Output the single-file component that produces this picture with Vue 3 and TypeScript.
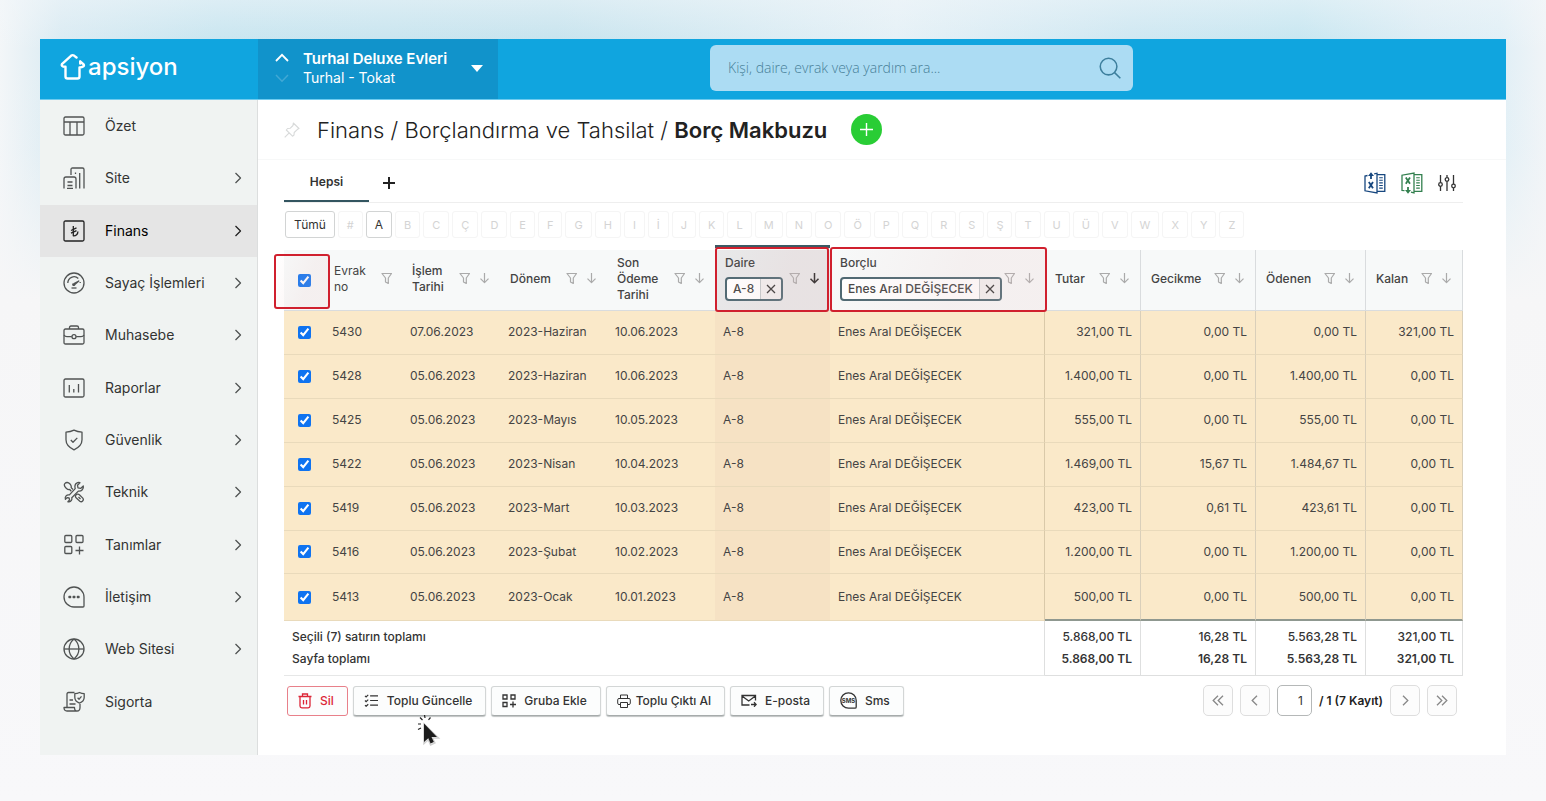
<script setup lang="ts">
import { ref } from 'vue'

interface MenuItem {
  label: string
  icon: string[]
  expandable: boolean
}

interface Receipt {
  no: string
  date: string
  period: string
  due: string
  unit: string
  debtor: string
  amounts: string[]
}

const menu: MenuItem[] = [
  {
    label: 'Özet',
    expandable: false,
    icon: ['M2.5 2h17q1.5 0 1.5 1.5v15q0 1.500-1.500 1.500h-17q-1.500 0-1.500-1.500v-15q0-1.500 1.500-1.500z', 'M1 7h20M7 7v13M14 7v13'],
  },
  {
    label: 'Site',
    expandable: true,
    icon: ['M8 8V2.500q0-1.500 1.500-1.500h10q1.500 0 1.500 1.500V21.500', 'M1 21.500V12q0-2 2-2h8q2 0 2 2v9.500', 'M4.500 15h5M4.500 18.500h5M4 21.500h6M16.700 6v15.500M12.500 5.500v1.500'],
  },
  {
    label: 'Finans',
    expandable: true,
    icon: ['M2.500 1h17q1.500 0 1.500 1.500v17q0 1.500-1.500 1.500h-17q-1.500 0-1.500-1.500v-17q0-1.500 1.500-1.500z', 'M10.300 6v9.800c2.700.2 4.600-1.600 4.600-4.300', 'M8 10.500l5.500-2.600M8 13.200l5.500-2.600'],
  },
  {
    label: 'Sayaç İşlemleri',
    expandable: true,
    icon: ['M11 1a10 10 0 1 1 0 20a10 10 0 1 1 0-20z', 'M4.800 11a6.300 6.300 0 0 1 10.500-4.600M17.200 10v1', 'M10 11.800a1 1 0 1 0 1.800.6zM11 11.500l4.800-2.500l-4 3.600', 'M8.500 16h5'],
  },
  {
    label: 'Muhasebe',
    expandable: true,
    icon: ['M2.500 5h17q1.500 0 1.500 1.500v12q0 1.500-1.500 1.500h-17q-1.500 0-1.500-1.500v-12q0-1.500 1.500-1.500z', 'M6.500 5V3.500q0-1.500 1.500-1.500h6q1.500 0 1.500 1.500V5', 'M1 11q1 1.700 3 1.700h4.800M13.200 12.700H18q2 0 3-1.700', 'M11 10.700a2 2 0 1 1 0 4a2 2 0 1 1 0-4z'],
  },
  {
    label: 'Raporlar',
    expandable: true,
    icon: ['M2.500 2h17q1.500 0 1.500 1.500v15q0 1.500-1.500 1.500h-17q-1.500 0-1.500-1.500v-15q0-1.500 1.500-1.500z', 'M6.300 8v7.500M10.800 12v3.500M15.500 7v8.500'],
  },
  {
    label: 'Güvenlik',
    expandable: true,
    icon: ['M11 1.200q3.500 1.800 8 1.900v7.700c0 4.600-2.500 7.500-8 10c-5.500-2.500-8-5.400-8-10V3.100q4.500-.1 8-1.900z', 'M7.800 11l2.200 2.200l4.300-4.300'],
  },
  {
    label: 'Teknik',
    expandable: true,
    icon: [
      'M12.200 7.600c-.7-2.600.1-4.600 1.500-5.500c1-.7 2.200-.8 3.200-.4l-2.400 2.600l.5 2.600l2.600.5l2.700-2.500c.6 2.900-1.600 5.600-5 5.200L8.800 16.700c.6 2-.8 3.900-2.700 4.200l-1.200-.1l1.700-1.900l-.5-1.900l-2-.4l-1.700 1.700c-.8-2.600 1.300-5 4-4.400z',
      'M8.300 10.200L6.700 8.500C5.500 8.800 4.300 8.200 3.200 7.200C1.300 5.500.9 3.700 2 2.400C3.300 1 5.200 1.300 6.800 2.800C8.200 4.200 8.500 5.300 8.200 6.600L10 8.500',
      'M12.700 14.300c1-1.300 2.500-1.600 3.700-.6l3.400 3.400c1.500 2-.9 4.600-3 3.100l-3.700-3.400c-.8-.9-.9-1.700-.4-2.500zM15.500 16l2 2',
    ],
  },
  {
    label: 'Tanımlar',
    expandable: true,
    icon: ['M2.800 1.500h5q1 0 1 1v5q0 1-1 1h-5q-1 0-1-1v-5q0-1 1-1zM14 1.500h5q1 0 1 1v5q0 1-1 1h-5q-1 0-1-1v-5q0-1 1-1zM2.800 12.500h5q1 0 1 1v5q0 1-1 1h-5q-1 0-1-1v-5q0-1 1-1z', 'M16.500 12.500v8M12.500 16.500h8'],
  },
  {
    label: 'İletişim',
    expandable: true,
    icon: ['M11 1a10 10 0 0 1 10 10V20q0 1-1 1H11a10 10 0 0 1 0-20z', 'M6 10.500h1.600v1h-1.600zM10.200 10.500h1.600v1h-1.600zM14.400 10.500h1.600v1h-1.600z'],
  },
  {
    label: 'Web Sitesi',
    expandable: true,
    icon: ['M11 1a10 10 0 1 1 0 20a10 10 0 1 1 0-20z', 'M11 1c-6.500 5.500-6.500 14.500 0 20M11 1c6.500 5.500 6.500 14.500 0 20', 'M1 11h20'],
  },
  {
    label: 'Sigorta',
    expandable: false,
    icon: ['M4 16V3q0-1.500 1.500-1.500H11.500', 'M1 16.500h10.500q0 3.500 2.500 3.500H4q-3 0-3-3.500zM14 20q3 0 3-3.500V13', 'M16.500 1.500q2.200 1.100 4.700 1.200v3.600q0 4.100-4.700 5.900q-4.700-1.800-4.700-5.900V2.700q2.500-.1 4.700-1.200z', 'M14.600 6.700l1.500 1.500l2.400-2.800', 'M6.500 9h3.500M6.500 13h6'],
  },
]

const letters: string[] = [...'#ABCÇDEFGHIİJKLMNOÖPQRSŞTUÜVWXYZ']

const makeRow = (no: string, date: string, period: string, due: string, amounts: string[]): Receipt => ({
  no, date, period, due, amounts, unit: 'A-8', debtor: 'Enes Aral DEĞİŞECEK',
})

const rows: Receipt[] = [
  makeRow('5430', '07.06.2023', '2023-Haziran', '10.06.2023', ['321,00', '0,00', '0,00', '321,00']),
  makeRow('5428', '05.06.2023', '2023-Haziran', '10.06.2023', ['1.400,00', '0,00', '1.400,00', '0,00']),
  makeRow('5425', '05.06.2023', '2023-Mayıs', '10.05.2023', ['555,00', '0,00', '555,00', '0,00']),
  makeRow('5422', '05.06.2023', '2023-Nisan', '10.04.2023', ['1.469,00', '15,67', '1.484,67', '0,00']),
  makeRow('5419', '05.06.2023', '2023-Mart', '10.03.2023', ['423,00', '0,61', '423,61', '0,00']),
  makeRow('5416', '05.06.2023', '2023-Şubat', '10.02.2023', ['1.200,00', '0,00', '1.200,00', '0,00']),
  makeRow('5413', '05.06.2023', '2023-Ocak', '10.01.2023', ['500,00', '0,00', '500,00', '0,00']),
]

const totals: string[] = ['5.868,00', '16,28', '5.563,28', '321,00']
const textColumns: string[] = ['İşlem Tarihi', 'Dönem', 'Son Ödeme Tarihi']
const moneyColumns: string[] = ['Tutar', 'Gecikme', 'Ödenen', 'Kalan']

const selected = ref<string[]>(rows.map((r) => r.no))
const allSelected = ref(true)
const page = ref('1')
const query = ref('')

const funnel = 'M1 1.500h9.500l-3.200 4.500v5.500l-2.800-1.500v-4z'
const arrow = 'M5.500 1v9.500M1.500 6.700l4 4l4-4'

function toggleAll(): void {
  selected.value = allSelected.value ? rows.map((r) => r.no) : []
}
</script>

<template>
  <div class="backdrop">
    <div class="window">
      <header class="topbar">
        <a class="brand" href="#" aria-label="apsiyon">
          <svg width="26" height="28" viewBox="0 0 26 28" fill="none" stroke="#fff" stroke-width="2.400" stroke-linecap="round" stroke-linejoin="round">
            <path d="M16.500 4.500L14 2.600Q12.500 1.600 11 2.800L2.200 10.800Q1 12.500 3 13.500L5.500 13.700V23.500Q5.500 25.500 7.500 25.500H17.500Q19.500 25.500 19.500 23.500V14.500Q22 14.500 23.500 13.300Q24.500 12 23 10.800L20.200 8.300V10.500" />
          </svg>
          <span>apsiyon</span>
        </a>
        <div class="site">
          <div class="steps">
            <button type="button" aria-label="Önceki site">
              <svg width="14" height="9" viewBox="0 0 14 9" fill="none" stroke="#fff" stroke-width="1.800"><path d="M1 8l6-6.200l6 6.200" /></svg>
            </button>
            <button type="button" class="dim" aria-label="Sonraki site">
              <svg width="14" height="9" viewBox="0 0 14 9" fill="none" stroke="#fff" stroke-width="1.500"><path d="M1 1l6 6.200l6-6.200" /></svg>
            </button>
          </div>
          <button type="button" class="site-name">
            <span><strong>Turhal Deluxe Evleri</strong><br>Turhal - Tokat</span>
            <svg width="12" height="7" viewBox="0 0 12 7" fill="#fff"><path d="M0 0h12l-6 7z" /></svg>
          </button>
        </div>
        <label class="search">
          <input v-model="query" type="text" placeholder="Kişi, daire, evrak veya yardım ara..." aria-label="Ara">
          <svg width="22" height="22" viewBox="0 0 23 23" fill="none" stroke="#3d7f9d" stroke-width="1.600"><circle cx="10" cy="10" r="8.700" /><path d="M16.300 16.300l6 6" /></svg>
        </label>
      </header>

      <div class="body">
        <nav class="sidebar">
          <a v-for="item in menu" :key="item.label" href="#" class="menu-item" :class="{ active: item.label === 'Finans' }">
            <svg class="menu-icon" width="22" height="22" viewBox="0 0 22 22"><path v-for="d in item.icon" :key="d" :d="d" /></svg>
            <span>{{ item.label }}</span>
            <svg v-if="item.expandable" class="chevron" width="8" height="12" viewBox="0 0 8 12"><path d="M1.500 1l5 5l-5 5" /></svg>
          </a>
        </nav>

        <main class="content">
          <div class="heading">
            <button type="button" class="pin" aria-label="Sabitle">
              <svg width="16" height="16" viewBox="0 0 16 16" fill="none" stroke="#d8dada" stroke-width="1.100" stroke-linejoin="round"><path d="M9.300 1l5.700 5.500l-1.500.8l-3.300 3.200l-.2 2.500l-1.500 1.200L2.300 8l1.300-1.500l2.500-.2L9 3.500zM5.200 10.800L.7 15.400" /></svg>
            </button>
            <h1>Finans / Borçlandırma ve Tahsilat / <b>Borç Makbuzu</b></h1>
            <button type="button" class="add" aria-label="Ekle">
              <svg width="15" height="15" viewBox="0 0 15 15" stroke="#fff" stroke-width="1.400"><path d="M7.500 1v13M1 7.500h13" /></svg>
            </button>
          </div>

          <div class="panel">
            <div class="tabs">
              <button type="button" class="tab">Hepsi</button>
              <button type="button" class="new-tab" aria-label="Yeni sekme">
                <svg width="12" height="12" viewBox="0 0 12 12" stroke="#222" stroke-width="2"><path d="M6 0v12M0 6h12" /></svg>
              </button>
              <div class="tools">
                <button type="button" aria-label="Excel yükle">
                  <svg width="22" height="22" viewBox="0 0 22 22" fill="none" stroke="#17477f" stroke-width="1.300">
                    <path d="M3.500 3.500L1 4v14.800l12 2.200V1.200l-2.800.6M13 2.700h7.800v16.600H13" />
                    <path d="M15.200 5.700h3.600M15.200 8.300h3.600M15.200 10.900h3.600M15.200 13.500h3.600M15.200 16.100h3.600" stroke-width="1.100" />
                    <path d="M4.800 10l4.200 6.300M9 10l-4.200 6.300M7 7V2" stroke-width="1.800" /><path d="M4 4l3-3.800l3 3.800z" fill="#17477f" stroke="none" />
                  </svg>
                </button>
                <button type="button" aria-label="Excel indir">
                  <svg width="22" height="22" viewBox="0 0 22 22" fill="none" stroke="#33804f" stroke-width="1.300">
                    <path d="M3.500 18.700L1 18.500V3.200l12-2.200v20l-3-.8M13 2.700h7.800v16.600H13" />
                    <path d="M15.200 5.700h3.600M15.200 8.300h3.600M15.200 10.900h3.600M15.200 13.500h3.600M15.200 16.100h3.600" stroke-width="1.100" />
                    <path d="M4.800 5.500l4.200 6.300M9 5.500l-4.200 6.300M7 15v4" stroke-width="1.800" /><path d="M4 18l3 3.800l3-3.800z" fill="#33804f" stroke="none" />
                  </svg>
                </button>
                <button type="button" aria-label="Sütun ayarları">
                  <svg width="18" height="18" viewBox="0 0 18 18" fill="none" stroke="#333" stroke-width="1.300">
                    <path d="M2.500 1v7.500M2.500 12.500v4.500M9 1v2.500M9 7.500v9.500M15.500 1v9M15.500 14v3" />
                    <circle cx="2.500" cy="10.500" r="1.800" /><circle cx="9" cy="5.500" r="1.800" /><circle cx="15.500" cy="12" r="1.800" />
                  </svg>
                </button>
              </div>
            </div>

            <div class="letters">
              <button type="button" class="letter on">Tümü</button>
              <button v-for="l in letters" :key="l" type="button" class="letter" :class="{ on: l === 'A' }">{{ l }}</button>
            </div>

            <table class="grid">
              <colgroup>
                <col class="c-check"><col class="c-no"><col class="c-date"><col class="c-period"><col class="c-due"><col class="c-unit"><col>
                <col class="c-amount"><col class="c-delay"><col class="c-paid"><col class="c-left">
              </colgroup>
              <thead>
                <tr>
                  <th class="marked check"><input v-model="allSelected" type="checkbox" aria-label="Tümünü seç" @change="toggleAll"></th>
                  <th class="plain">
                    <div class="head"><span class="narrow">Evrak no</span><svg class="hi" viewBox="0 0 11 12"><path :d="funnel" /></svg></div>
                  </th>
                  <th v-for="c in textColumns" :key="c">
                    <div class="head">
                      <span class="narrow">{{ c }}</span>
                      <svg class="hi" viewBox="0 0 11 12"><path :d="funnel" /></svg><svg class="hi" viewBox="0 0 11 12"><path :d="arrow" /></svg>
                    </div>
                  </th>
                  <th class="marked unit sorted">
                    <div class="head">
                      <div class="stack">Daire<span class="chip"><span>A-8</span><button type="button" aria-label="A-8 filtresini kaldır"><svg width="10" height="10" viewBox="0 0 10 10"><path d="M1 1l8 8M9 1l-8 8" /></svg></button></span></div>
                      <svg class="hi" viewBox="0 0 11 12"><path :d="funnel" /></svg><svg class="hi dark" viewBox="0 0 11 12"><path :d="arrow" /></svg>
                    </div>
                  </th>
                  <th class="marked debtor">
                    <div class="head">
                      <div class="stack">Borçlu<span class="chip"><span>Enes Aral DEĞİŞECEK</span><button type="button" aria-label="Borçlu filtresini kaldır"><svg width="10" height="10" viewBox="0 0 10 10"><path d="M1 1l8 8M9 1l-8 8" /></svg></button></span></div>
                      <svg class="hi" viewBox="0 0 11 12"><path :d="funnel" /></svg><svg class="hi" viewBox="0 0 11 12"><path :d="arrow" /></svg>
                    </div>
                  </th>
                  <th v-for="c in moneyColumns" :key="c" class="money">
                    <div class="head">
                      <span>{{ c }}</span>
                      <svg class="hi" viewBox="0 0 11 12"><path :d="funnel" /></svg><svg class="hi" viewBox="0 0 11 12"><path :d="arrow" /></svg>
                    </div>
                  </th>
                </tr>
              </thead>
              <tbody>
                <tr v-for="r in rows" :key="r.no">
                  <td class="check"><input v-model="selected" type="checkbox" :value="r.no" :aria-label="r.no"></td>
                  <td>{{ r.no }}</td>
                  <td>{{ r.date }}</td>
                  <td>{{ r.period }}</td>
                  <td>{{ r.due }}</td>
                  <td class="unit">{{ r.unit }}</td>
                  <td>{{ r.debtor }}</td>
                  <td v-for="(a, i) in r.amounts" :key="i" class="money">{{ a }} TL</td>
                </tr>
              </tbody>
              <tfoot>
                <tr>
                  <td colspan="7">Seçili (7) satırın toplamı<br>Sayfa toplamı</td>
                  <td v-for="t in totals" :key="t" class="money">{{ t }} TL<br><b>{{ t }} TL</b></td>
                </tr>
              </tfoot>
            </table>

            <div class="footer">
              <button type="button" class="action danger">
                <svg width="14" height="16" viewBox="0 0 14 16"><path d="M.5 3.500h13M4.500 3.500V1h5v2.500M2 3.500V13q0 1.800 1.800 1.800h6.400q1.800 0 1.800-1.800V3.500M5.500 7v4.500M8.500 7v4.500" /></svg>Sil
              </button>
              <div class="with-cursor">
                <button type="button" class="action">
                  <svg width="15" height="13" viewBox="0 0 16 14"><path d="M6.500 2H15M6.500 7H15M6.500 12H15M1 2l1.200 1.200L4.500 1M1 7l1.200 1.200L4.500 6M1 12l1.200 1.200L4.500 11" /></svg>Toplu Güncelle
                </button>
                <svg class="cursor" width="24" height="32" viewBox="0 0 24 32">
                  <path d="M7 9v19.500l4.300-3.800l2.300 5.300l4.300-2l-2.400-5h6z" fill="#fff" stroke="#d0d0d0" stroke-width="1.500" />
                  <path d="M7 8.500v18.500l4.300-3.800l2.300 5.300l3.300-1.500l-2.400-5h5.500z" fill="#1c1c1c" />
                  <path d="M1 9h3M3 2.500l2.500 2.500M7.500 0l.5 3M13.500 2.500l-2 2.300M1 14.500l3-1.500" stroke="#222" stroke-width="1.200" fill="none" />
                </svg>
              </div>
              <button type="button" class="action">
                <svg width="14" height="14" viewBox="0 0 14 14"><path d="M1 1h4v4H1zM9 1h4v4H9zM1 8.500h4v4H1zM11 7.500v6M8 10.500h6" /></svg>Gruba Ekle
              </button>
              <button type="button" class="action tight">
                <svg width="14" height="14" viewBox="0 0 14 14" class="thin"><path d="M3.500 4.500V1h7v3.500M3.500 10.500H2q-1.300 0-1.300-1.300V5.800q0-1.300 1.300-1.300h10q1.300 0 1.300 1.300v3.400q0 1.300-1.300 1.300h-1.500M3.500 8.500h7v5h-7z" /></svg>Toplu Çıktı Al
              </button>
              <button type="button" class="action">
                <svg width="16" height="13" viewBox="0 0 16 13"><path d="M8.500 11H1V1.500h13.500V6.500M1 2l6.700 5l6.700-5M10 10.500h5M13 8.300l2.200 2.200L13 12.700" /></svg>E-posta
              </button>
              <button type="button" class="action">
                <svg width="17" height="17" viewBox="0 0 17 17"><path d="M8.500.8a7.700 7.700 0 0 1 7.700 7.700V15q0 1.200-1.200 1.200H8.500a7.700 7.700 0 0 1 0-15.400z" /><text x="8.500" y="10.500" text-anchor="middle">SMS</text></svg>Sms
              </button>

              <div class="pager">
                <button type="button" aria-label="İlk sayfa"><svg width="12" height="11" viewBox="0 0 12 11"><path d="M6 .7L1.200 5.500L6 10.300M11 .7L6.200 5.500L11 10.300" /></svg></button>
                <button type="button" aria-label="Önceki sayfa"><svg width="7" height="11" viewBox="0 0 7 11"><path d="M6 .7L1.200 5.500L6 10.300" /></svg></button>
                <label class="page"><input v-model="page" type="text" aria-label="Sayfa"><span>/ 1 (7 Kayıt)</span></label>
                <button type="button" aria-label="Sonraki sayfa"><svg width="7" height="11" viewBox="0 0 7 11"><path d="M1 .7L5.800 5.500L1 10.300" /></svg></button>
                <button type="button" aria-label="Son sayfa"><svg width="12" height="11" viewBox="0 0 12 11"><path d="M1 .7L5.800 5.500L1 10.300M6 .7L10.800 5.500L6 10.300" /></svg></button>
              </div>
            </div>
          </div>
        </main>
      </div>
    </div>
  </div>
</template>

<style>
body {
  margin: 0;
  background: #f8f8fa;
}
</style>

<style scoped>
* {
  box-sizing: border-box;
}

button {
  padding: 0;
  border: 0;
  background: none;
  color: inherit;
  font: inherit;
  cursor: pointer;
}

svg {
  display: block;
  flex: none;
}

a {
  color: inherit;
  text-decoration: none;
}

.backdrop {
  display: flex;
  min-height: 100vh;
  padding: 39px 40px 46px;
  font: 400 12px/16px Inter, "Liberation Sans", sans-serif;
  color: #333;
  background:
    linear-gradient(rgba(243, 247, 250, 0.5), rgba(243, 247, 250, 0) 50px, rgba(246, 246, 247, 0.1) 150px, #f6f6f7 300px, #f8f8fa 100%),
    linear-gradient(90deg, #f3f6f8, #d8eaf2 4%, #c5e4ef 14%, #c3e2ed 36%, #e4f0f6 58%, #cbe6f1 73%, #c3e5f0 84%, #daecf4 92%, #e0eff6 97%, #f0f4f7);
}

.window {
  flex: 1;
  min-width: 0;
  display: flex;
  flex-direction: column;
  background: #fff;
}

.topbar {
  display: flex;
  height: 61px;
  background: #10a5df;
  border-bottom: 1px solid #6fcbef;
  color: #fff;
}

.brand {
  width: 218px;
  display: flex;
  align-items: center;
  gap: 2px;
  padding: 0 0 4px 20px;
  font: 500 24px/32px Inter, sans-serif;
}

.site {
  width: 240px;
  display: flex;
  align-items: center;
  gap: 14px;
  padding: 0 15px 2px 17px;
  background: #1193cb;
}

.steps {
  display: grid;
  gap: 12px;
}

.dim {
  opacity: 0.2;
}

.site-name {
  flex: 1;
  display: flex;
  align-items: center;
  justify-content: space-between;
  text-align: left;
  font-size: 14px;
  line-height: 19px;
}

.site-name strong {
  font-size: 15px;
  font-weight: 600;
}

.search {
  width: 423px;
  height: 46px;
  margin: 6px 0 0 212px;
  padding: 0 12px 0 18px;
  display: flex;
  align-items: center;
  background: #acdcf3;
  border-radius: 6px;
}

.search input {
  flex: 1;
  min-width: 0;
  padding: 0;
  border: 0;
  outline: 0;
  background: none;
  font: 300 14px/20px "Open Sans", sans-serif;
  color: #2b617b;
}

.search input::placeholder {
  color: #477f98;
  opacity: 1;
}

.body {
  flex: 1;
  display: flex;
}

.sidebar {
  width: 218px;
  flex: none;
  display: flex;
  flex-direction: column;
  padding-bottom: 27px;
  background: #f0f3f2;
  border-right: 1px solid #dcdede;
}

.menu-item {
  flex: 1;
  min-height: 44px;
  display: flex;
  align-items: center;
  gap: 20px;
  padding: 0 15px 0 23px;
  font-size: 14px;
  line-height: 20px;
}

.menu-item.active {
  background: #e5e5e5;
  color: #000;
}

.menu-icon,
.chevron {
  fill: none;
  stroke: #505353;
  stroke-width: 1.300;
  stroke-linejoin: round;
}

.chevron {
  margin-left: auto;
}

.active svg {
  stroke: #222;
}

.content {
  flex: 1;
  min-width: 0;
}

.heading {
  height: 60px;
  display: flex;
  align-items: center;
  padding-left: 26px;
  border-bottom: 1px solid #f7f8f8;
}

h1 {
  margin: 0 24px 0 17px;
  font-size: 22px;
  line-height: 30px;
  font-weight: 300;
  color: #222;
}

h1 b {
  font-weight: 600;
}

.add {
  width: 31px;
  height: 31px;
  display: grid;
  place-items: center;
  border-radius: 50%;
  background: #29cd35;
}

.panel {
  padding: 4px 43px 20px 26px;
}

.tabs {
  height: 39px;
  display: flex;
  align-items: center;
  border-bottom: 1px solid #eee;
}

.tab {
  align-self: stretch;
  width: 85px;
  border-bottom: 2px solid #335560;
  font-weight: 600;
}

.new-tab {
  margin-left: 14px;
}

.tools {
  display: flex;
  align-items: center;
  gap: 15px;
  margin-left: auto;
  padding-right: 7px;
}

.letters {
  display: flex;
  gap: 3px;
  padding: 8px 1px 12px;
}

.letter {
  height: 27px;
  padding: 0 8px;
  border: 1px solid #f5f5f5;
  border-radius: 3px;
  color: #d4d4d4;
  font-size: 11px;
}

.letter.on {
  border-color: #d2d4d4;
  color: #333;
  font-size: 12px;
}

.grid {
  width: 100%;
  height: 426px;
  table-layout: fixed;
  border-collapse: separate;
  border-spacing: 0;
  color: #444;
}

.c-check { width: 40px; }
.c-no { width: 78px; }
.c-date { width: 98px; }
.c-period { width: 107px; }
.c-due { width: 108px; }
.c-unit { width: 115px; }
.c-amount { width: 96px; }
.c-delay { width: 115px; }
.c-paid { width: 110px; }
.c-left { width: 97px; }

th {
  position: relative;
  height: 61px;
  padding: 0 10px 2px;
  background: #f7f9f9;
  border-bottom: 1px solid #d9dcde;
  font-weight: 500;
  text-align: left;
}

th.plain {
  font-weight: 400;
}

.head {
  display: flex;
  align-items: center;
  gap: 9px;
}

.head > :first-child {
  flex: 1;
  min-width: 0;
}

.narrow {
  max-width: 46px;
  margin-right: auto;
}

.hi {
  width: 11px;
  height: 12px;
  margin-bottom: 2px;
  fill: none;
  stroke: #aaa;
  stroke-width: 1.200;
  stroke-linejoin: round;
}

.hi.dark {
  stroke: #222;
  stroke-width: 1.500;
}

.marked::after {
  content: "";
  position: absolute;
  z-index: 1;
  inset: -3px 1px -2px 0;
  border: 2px solid #d0202e;
  border-radius: 3px;
  background: linear-gradient(110deg, transparent, rgba(230, 190, 190, 0.16) 60%);
  pointer-events: none;
}

.check.marked::after {
  inset: 4px -6px 1px -10px;
}

.debtor.marked::after {
  right: -2px;
}

.sorted::before {
  content: "";
  position: absolute;
  inset: -5px 0 auto 0;
  height: 3px;
  background: #3c5a64;
}

th.unit {
  background: #e8e9ea;
}

.grid .check {
  padding: 0;
}

.check input {
  display: block;
  width: 13px;
  height: 13px;
  margin: 0 auto;
  accent-color: #0f73f0;
}

.stack {
  display: grid;
  justify-items: start;
  gap: 6px;
  margin-bottom: 2px;
  white-space: nowrap;
}

.chip {
  height: 24px;
  display: flex;
  align-items: center;
  border: 2px solid #4b6670;
  border-radius: 4px;
  background: #fff;
  overflow: hidden;
}

.chip > span {
  padding: 0 6px;
}

.chip button {
  align-self: stretch;
  padding: 0 5px;
  border-left: 1px solid #c4cacc;
  background: #f1f0f0;
}

.chip svg {
  stroke: #333;
  stroke-width: 1.300;
}

tbody td {
  padding: 0 8px;
  background: #fae9c9;
  border-bottom: 1px solid #e9dabb;
}

tbody td.unit {
  background: #f6e2c4;
}

.money {
  border-right: 1px solid #d9cfba;
}

th.money {
  border-color: #d9dcde;
}

td.money {
  text-align: right;
}

tbody td:nth-child(7) {
  border-right: 1px solid #d9c9a9;
}

tbody tr:last-child .money {
  border-bottom: 2px solid #8f9890;
}

tfoot td {
  height: 55px;
  padding: 0 8px;
  border-bottom: 1px solid #e6e7e7;
  border-right: 1px solid #dedfdf;
  font-weight: 500;
  line-height: 22px;
  color: #333;
}

tfoot td.money {
  border-color: #dedfdf;
}

tfoot b {
  font-weight: 600;
}

.footer {
  display: flex;
  align-items: center;
  gap: 5px;
  padding: 9px 6px 0 3px;
}

.action {
  height: 30px;
  display: flex;
  align-items: center;
  gap: 8px;
  padding: 0 13px 0 10px;
  border: 1px solid #d3d6d6;
  border-bottom-color: #a6abab;
  border-radius: 3px;
  background: #fcfdfd;
  box-shadow: 0 1px 1px #bfc3c3;
  font-weight: 500;
  white-space: nowrap;
}

.action svg {
  fill: none;
  stroke: #333;
  stroke-width: 1.300;
}

.action .thin {
  stroke-width: 1;
}

.action text {
  fill: #333;
  stroke: none;
  font: 700 6px Inter, sans-serif;
}

.action.tight {
  gap: 5px;
}

.action.danger {
  border-color: #e8808a;
  box-shadow: none;
  color: #dc2637;
}

.danger svg {
  stroke: #dc2637;
}

.with-cursor {
  position: relative;
}

.cursor {
  position: absolute;
  z-index: 2;
  left: 64px;
  top: 29px;
}

.pager {
  display: flex;
  align-items: center;
  gap: 7px;
  margin-left: auto;
}

.pager button {
  width: 30px;
  height: 31px;
  display: grid;
  place-items: center;
  border: 1px solid #dedede;
  border-radius: 5px;
  background: #fcfcfc;
}

.pager svg {
  fill: none;
  stroke: #888;
  stroke-width: 1.300;
}

.page {
  display: flex;
  align-items: center;
  gap: 7px;
  font-weight: 600;
  color: #222;
}

.page input {
  width: 35px;
  height: 31px;
  padding: 0 8px;
  border: 1px solid #b5b8b8;
  border-radius: 5px;
  background: #fff;
  font: 400 12px/16px Inter, sans-serif;
  color: #333;
  text-align: right;
}
</style>
